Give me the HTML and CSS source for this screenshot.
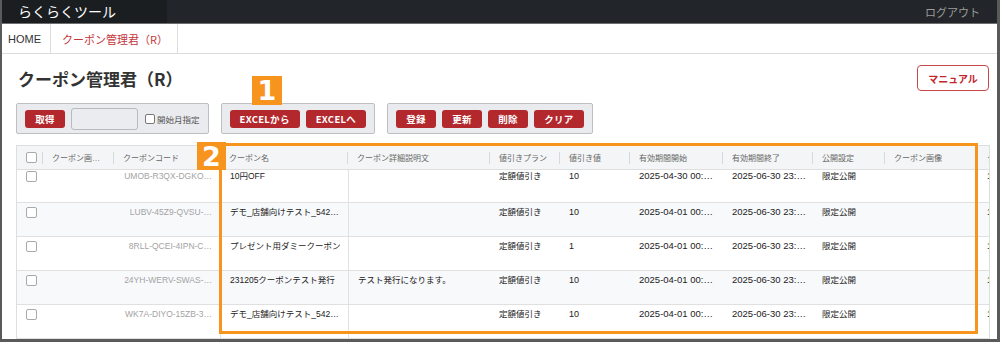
FILE: index.html
```html
<!DOCTYPE html>
<html lang="ja">
<head>
<meta charset="utf-8">
<title>クーポン管理君（R）</title>
<link rel="stylesheet" href="styles.css">
</head>
<body>
<div class="frame">
  <header class="topbar">
    <div class="brand">らくらくツール</div>
    <div class="topbar-fill"><span class="logout">ログアウト</span></div>
  </header>
  <nav class="tabs">
    <span class="tab home">HOME</span>
    <span class="tab active">クーポン管理君（R）</span>
  </nav>
  <main class="main">
    <div class="title-row">
      <h1 class="title">クーポン管理君（R）</h1>
      <button class="btn-outline">マニュアル</button>
    </div>
    <div class="toolbar">
      <div class="group">
        <button class="btn">取得</button>
        <span class="input"></span>
        <label class="check"><span class="box"></span>開始月指定</label>
      </div>
      <div class="group">
        <button class="btn">EXCELから</button>
        <button class="btn">EXCELへ</button>
      </div>
      <div class="group">
        <button class="btn">登録</button>
        <button class="btn">更新</button>
        <button class="btn">削除</button>
        <button class="btn">クリア</button>
      </div>
    </div>
    <div class="grid">
      <table>
        <colgroup>
          <col class="w0"><col class="w1"><col class="w2"><col class="w3"><col class="w4"><col class="w5">
          <col class="w6"><col class="w7"><col class="w8"><col class="w9"><col class="w10"><col class="w11">
        </colgroup>
        <thead>
          <tr>
            <th><span class="cb"></span></th>
            <th>クーポン画…</th>
            <th>クーポンコード</th>
            <th>クーポン名</th>
            <th>クーポン詳細説明文</th>
            <th>値引きプラン</th>
            <th>値引き値</th>
            <th>有効期間開始</th>
            <th>有効期間終了</th>
            <th>公開設定</th>
            <th>クーポン画像</th>
            <th class="last">クーポン…</th>
          </tr>
        </thead>
        <tbody>
          <tr class="first">
            <td><span class="cb"></span></td><td></td>
            <td class="code">UMOB-R3QX-DGKO…</td>
            <td class="sep">10円OFF</td>
            <td class="sep"></td>
            <td>定額値引き</td>
            <td class="n">10</td>
            <td class="d">2025-04-30 00:…</td>
            <td class="d">2025-06-30 23:…</td>
            <td>限定公開</td><td></td><td class="n">1</td>
          </tr>
          <tr>
            <td><span class="cb"></span></td><td></td>
            <td class="code">LUBV-45Z9-QVSU-…</td>
            <td class="sep">デモ_店舗向けテスト_542…</td>
            <td class="sep"></td>
            <td>定額値引き</td>
            <td class="n">10</td>
            <td class="d">2025-04-01 00:…</td>
            <td class="d">2025-06-30 23:…</td>
            <td>限定公開</td><td></td><td class="n">1</td>
          </tr>
          <tr>
            <td><span class="cb"></span></td><td></td>
            <td class="code">8RLL-QCEI-4IPN-C…</td>
            <td class="sep">プレゼント用ダミークーポン</td>
            <td class="sep"></td>
            <td>定額値引き</td>
            <td class="n">1</td>
            <td class="d">2025-04-01 00:…</td>
            <td class="d">2025-06-30 23:…</td>
            <td>限定公開</td><td></td><td class="n">1</td>
          </tr>
          <tr>
            <td><span class="cb"></span></td><td></td>
            <td class="code">24YH-WERV-SWAS-…</td>
            <td class="sep">231205クーポンテスト発行</td>
            <td class="sep">テスト発行になります。</td>
            <td>定額値引き</td>
            <td class="n">10</td>
            <td class="d">2025-04-01 00:…</td>
            <td class="d">2025-06-30 23:…</td>
            <td>限定公開</td><td></td><td class="n">1</td>
          </tr>
          <tr>
            <td><span class="cb"></span></td><td></td>
            <td class="code">WK7A-DIYO-15ZB-3…</td>
            <td class="sep">デモ_店舗向けテスト_542…</td>
            <td class="sep"></td>
            <td>定額値引き</td>
            <td class="n">10</td>
            <td class="d">2025-04-01 00:…</td>
            <td class="d">2025-06-30 23:…</td>
            <td>限定公開</td><td></td><td class="n">1</td>
          </tr>
          <tr>
            <td><span class="cb"></span></td><td></td><td class="code"></td>
            <td class="sep"></td><td class="sep"></td>
            <td></td><td></td><td></td><td></td><td></td><td></td><td></td>
          </tr>
        </tbody>
      </table>
    </div>
  </main>
  <div class="badge b1">1</div>
  <div class="highlight"></div>
  <div class="badge b2">2</div>
</div>
</body>
</html>
```

FILE: styles.css
```css
* { box-sizing: border-box; }
html, body { margin: 0; padding: 0; }
body {
  width: 1000px;
  height: 342px;
  overflow: hidden;
  background: #fff;
  font-family: "Liberation Sans", "Noto Sans CJK JP", sans-serif;
  color: #222;
}
.frame {
  position: relative;
  height: 342px;
  border-style: solid;
  border-color: #5a5a5a;
  border-width: 0 3px 3px 2px;
  overflow: hidden;
}

/* top bar */
.topbar {
  display: flex;
  height: 24px;
  background: #222529;
  border-bottom: 1px solid #6e6e6e;
}
.brand {
  width: 165px;
  padding-left: 16px;
  background: #1b1e21;
  color: #fff;
  font-family: "Noto Sans CJK JP", sans-serif;
  font-size: 14px;
  line-height: 23px;
}
.topbar-fill {
  flex: 1;
  display: flex;
  justify-content: flex-end;
  align-items: center;
  padding-right: 17px;
}
.logout {
  color: #9c9c9c;
  font-family: "Noto Sans CJK JP", sans-serif;
  font-size: 11px;
}

/* tabs */
.tabs {
  display: flex;
  height: 30px;
  border-bottom: 1px solid #dcdcdc;
}
.tab {
  display: flex;
  align-items: center;
  border-right: 1px solid #dedede;
  font-size: 11px;
}
.tab.home { padding: 0 9px 0 6px; color: #333; }
.tab.active {
  padding: 0 9px 0 11px;
  color: #c4383c;
  font-family: "Noto Sans CJK JP", sans-serif;
}

/* main */
.main { padding: 0 7px 0 14px; }
.title-row {
  display: flex;
  justify-content: space-between;
  align-items: center;
  height: 26px;
  margin-top: 11px;
}
.title {
  margin: 0 0 0 2px;
  font-family: "Noto Sans CJK JP", sans-serif;
  font-size: 17px;
  font-weight: bold;
  color: #333;
}
.btn-outline {
  width: 72px;
  height: 26px;
  margin-right: 1px;
  border: 1px solid #c9464a;
  border-radius: 4px;
  background: #fff;
  color: #c0282d;
  font-family: "Noto Sans CJK JP", sans-serif;
  font-size: 10px;
  font-weight: bold;
  padding: 0;
}

.toolbar {
  display: flex;
  gap: 12px;
  margin-top: 12px;
}
.group {
  display: flex;
  align-items: center;
  gap: 6px;
  height: 31px;
  padding: 0 8px;
  border: 1px solid #bdbfc3;
  border-radius: 2px;
  background: #e9ebee;
}
.btn {
  height: 18px;
  min-width: 40px;
  padding: 0 10px;
  border: 0;
  border-radius: 3px;
  background: #b3282d;
  color: #fff;
  font-family: "Noto Sans CJK JP", sans-serif;
  font-size: 9.5px;
  font-weight: bold;
  line-height: 18px;
  letter-spacing: 0.3px;
}
.input {
  width: 67px;
  height: 22px;
  border: 1px solid #b8babd;
  border-radius: 3px;
  background: #eaecef;
}
.check {
  display: flex;
  align-items: center;
  gap: 2px;
  margin-left: 1px;
  color: #555;
  font-family: "Noto Sans CJK JP", sans-serif;
  font-size: 8.5px;
}
.check .box {
  width: 10px;
  height: 10px;
  border: 1px solid #777;
  border-radius: 2px;
  background: #fff;
}

/* grid */
.grid {
  margin-top: 11px;
  border: 1px solid #dedede;
  overflow: hidden;
}
table {
  width: 1043px;
  table-layout: fixed;
  border-collapse: separate;
  border-spacing: 0;
}
.w0 { width: 26px; }
.w1 { width: 71px; }
.w2 { width: 106px; }
.w3 { width: 128px; }
.w4 { width: 142px; }
.w5 { width: 70px; }
.w6 { width: 70px; }
.w7 { width: 93px; }
.w8 { width: 90px; }
.w9 { width: 72px; }
.w10 { width: 93px; }
.w11 { width: 82px; }

th {
  height: 24px;
  padding: 0 9px;
  background-color: #f4f5f6;
  background-image: linear-gradient(#d9d9d9, #d9d9d9);
  background-size: 1px 12px;
  background-position: right center;
  background-repeat: no-repeat;
  border-bottom: 1px solid #dedede;
  color: #666;
  font-size: 8px;
  font-weight: normal;
  text-align: left;
  white-space: nowrap;
  overflow: hidden;
  vertical-align: middle;
}
th.last { background-image: none; }
td {
  height: 34px;
  padding: 3px 9px 0;
  border-bottom: 1px solid #e0e0e0;
  font-size: 8.5px;
  line-height: 12px;
  vertical-align: top;
  white-space: nowrap;
  overflow: hidden;
  color: #222;
}
tr.first td { height: 33px; padding-top: 0; }
tbody tr:nth-child(even) td { background: #f8f9fb; }
td.sep { border-left: 1px solid #e2e2e2; }
td.code { text-align: right; color: #a3a3a3; padding-right: 8px; }
td.d { font-size: 9.5px; }
td.n { font-size: 9px; }
.cb {
  display: block;
  width: 11px;
  height: 11px;
  margin-top: 1px;
  border: 1px solid #a9a9a9;
  border-radius: 2px;
  background: #fff;
}
th .cb { margin-top: 0; }

/* annotations */
.badge {
  position: absolute;
  display: flex;
  align-items: center;
  justify-content: center;
  background: #f7941d;
  color: #fff;
  font-family: "DejaVu Sans", sans-serif;
  font-weight: bold;
  font-size: 27px;
}
.b1 { left: 250px; top: 76px; width: 30px; height: 29px; }
.b2 { left: 195px; top: 142px; width: 29px; height: 28px; }
.highlight {
  position: absolute;
  left: 217px;
  top: 143px;
  width: 759px;
  height: 191px;
  border: 3px solid #f7941d;
}
```
